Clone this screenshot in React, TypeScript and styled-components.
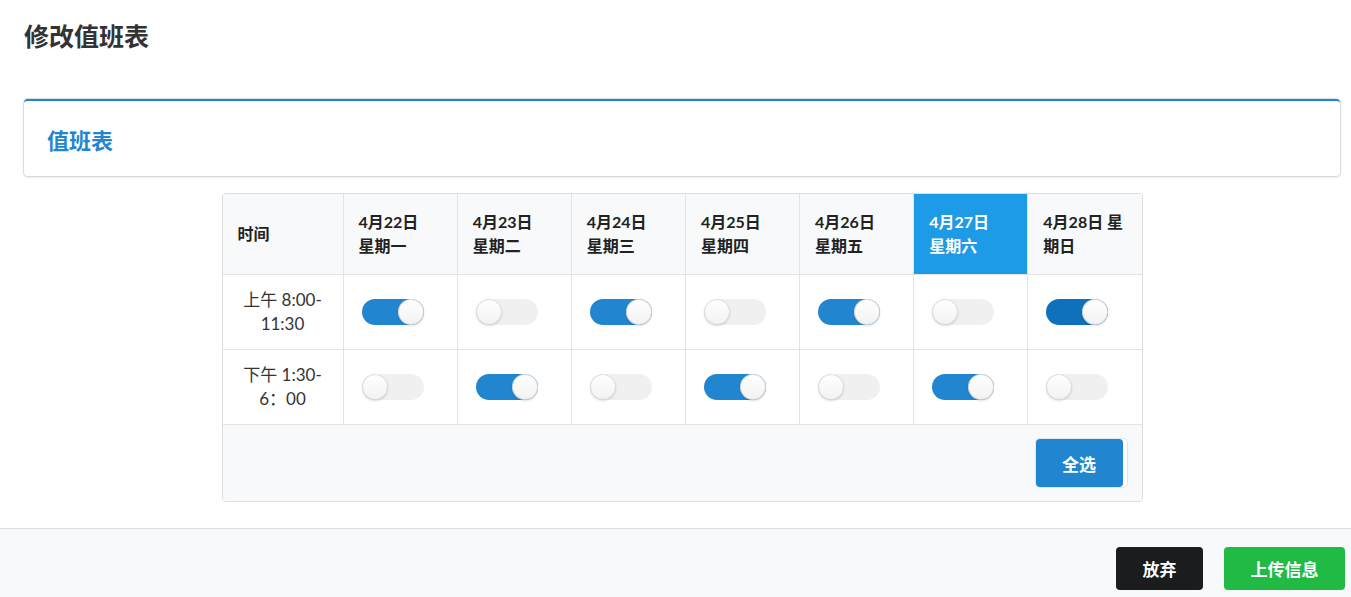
import styled, {createGlobalStyle} from "styled-components";
import {useState} from "react";

const GlobalStyle = createGlobalStyle`
  html, body {
    margin: 0;
    padding: 0;
    background: #fff;
  }

  body {
    font-family: Lato, "Noto Sans CJK SC", "Helvetica Neue", Arial, sans-serif;
    font-size: 14px;
    color: rgba(0, 0, 0, .87);
  }
`
const Page = styled.div`
  width: 1351px;
  height: 597px;
  display: flex;
  flex-direction: column;
  overflow: hidden;
`
const Main = styled.div`
  flex-grow: 1;
  padding: 0 11px 0 24px;
`
const PageTitle = styled.h1`
  margin: 0;
  padding: 21px 0 0;
  height: 99px;
  box-sizing: border-box;
  font-size: 25px;
  line-height: 30px;
  font-weight: 700;
  color: #333;
`
const Card = styled.div`
  height: 77px;
  box-sizing: border-box;
  border-top: 2px solid #2185d0;
  border-radius: 4px;
  background: #fff;
  box-shadow: 0 1px 3px 0 #d4d4d5, 0 0 0 1px #e3e3e3;
  display: flex;
  align-items: center;
  padding: 0 23px;

  h2 {
    margin: 0;
    font-size: 22px;
    font-weight: 700;
    color: #2185d0;
  }
`
const TableWrapper = styled.div`
  display: flex;
  justify-content: center;
  padding-top: 17px;
`
const Table = styled.table`
  width: 921px;
  border-collapse: separate;
  border-spacing: 0;
  border: 1px solid #dedede;
  border-radius: 4px;
  overflow: hidden;
  table-layout: fixed;
`
const HeadCell = styled.th<{ $active?: boolean }>`
  height: 81px;
  box-sizing: border-box;
  padding: 0 10px 0 15px;
  text-align: left;
  vertical-align: middle;
  font-size: 16px;
  line-height: 24px;
  font-weight: 700;
  background: ${p => p.$active ? '#1e9be6' : '#f8f9fa'};
  color: ${p => p.$active ? '#fff' : '#222'};
  border-bottom: 1px solid #e3e3e3;

  & + & {
    border-left: 1px solid #e3e3e3;
  }
`
const TimeCell = styled.td`
  height: 75px;
  box-sizing: border-box;
  padding: 0;
  text-align: center;
  vertical-align: middle;
  font-size: 17px;
  line-height: 24px;
  font-weight: 400;
  color: #333;
  border-bottom: 1px solid #e3e3e3;
`
const SwitchCell = styled.td`
  height: 75px;
  box-sizing: border-box;
  padding: 0 0 0 18px;
  vertical-align: middle;
  border-bottom: 1px solid #e3e3e3;
  border-left: 1px solid #e3e3e3;
`
const FootCell = styled.td`
  height: 76px;
  box-sizing: border-box;
  background: #f8f9fa;
  text-align: right;
  padding: 0 15px 0 0;
  vertical-align: middle;
`
const Toggle = styled.button<{ $on: boolean; $focus?: boolean }>`
  position: relative;
  display: block;
  width: 62px;
  height: 26px;
  padding: 0;
  border: none;
  border-radius: 13px;
  cursor: pointer;
  outline: none;
  background: ${p => p.$on ? (p.$focus ? '#0d71bb' : '#2185d0') : '#f0f0f0'};

  &::after {
    content: '';
    position: absolute;
    top: 0;
    left: ${p => p.$on ? '36px' : '0'};
    width: 26px;
    height: 26px;
    border-radius: 50%;
    background: linear-gradient(transparent, rgba(0, 0, 0, .05)) #fff;
    box-shadow: 0 1px 2px 0 rgba(34, 36, 38, .15), 0 0 0 1px rgba(34, 36, 38, .15) inset;
  }
`
const SelectAllFrame = styled.span`
  display: inline-block;
  padding-right: 4px;
  background: #fff;
  border-radius: 4px;
  box-shadow: 0 0 0 1px #e6e6e6;
`
const Button = styled.button<{ $color: string; $width: number; $height: number }>`
  display: block;
  width: ${p => p.$width}px;
  height: ${p => p.$height}px;
  border: none;
  border-radius: 4px;
  background: ${p => p.$color};
  color: #fff;
  font-family: Lato, "Noto Sans CJK SC", sans-serif;
  font-size: 17px;
  font-weight: 700;
  cursor: pointer;
`
const BottomBar = styled.div`
  height: 69px;
  box-sizing: border-box;
  border-top: 1px solid #dcdcdc;
  background: #f8f9fa;
  display: flex;
  justify-content: flex-end;
  align-items: flex-start;
  gap: 21px;
  padding: 18px 6px 0 0;
`

type Day = {
    date: string
    week: string
    inline?: boolean
}
const days: Day[] = [
    {date: '4月22日', week: '星期一'},
    {date: '4月23日', week: '星期二'},
    {date: '4月24日', week: '星期三'},
    {date: '4月25日', week: '星期四'},
    {date: '4月26日', week: '星期五'},
    {date: '4月27日', week: '星期六'},
    {date: '4月28日', week: '星期日', inline: true},
]
const shifts = [
    ['上午 8:00-', '11:30'],
    ['下午 1:30-', '6：00'],
]

const App = () => {
    const [duty, setDuty] = useState<boolean[][]>([
        [true, false, true, false, true, false, true],
        [false, true, false, true, false, true, false],
    ])
    const toggle = (row: number, col: number) => {
        setDuty(d => d.map((r, i) => i === row ? r.map((v, j) => j === col ? !v : v) : r))
    }
    return (
        <Page>
            <GlobalStyle/>
            <Main>
                <PageTitle>修改值班表</PageTitle>
                <Card>
                    <h2>值班表</h2>
                </Card>
                <TableWrapper>
                    <Table>
                        <colgroup>
                            <col style={{width: 120}}/>
                            {days.map(day => <col key={day.date}/>)}
                        </colgroup>
                        <thead>
                        <tr>
                            <HeadCell>时间</HeadCell>
                            {days.map((day, i) =>
                                <HeadCell key={day.date} $active={i === 5}>
                                    {day.inline ? `${day.date} ${day.week}` : <>{day.date}<br/>{day.week}</>}
                                </HeadCell>
                            )}
                        </tr>
                        </thead>
                        <tbody>
                        {shifts.map((shift, row) =>
                            <tr key={row}>
                                <TimeCell>{shift[0]}<br/>{shift[1]}</TimeCell>
                                {duty[row].map((on, col) =>
                                    <SwitchCell key={col}>
                                        <Toggle $on={on}
                                                $focus={row === 0 && col === 6}
                                                onClick={() => toggle(row, col)}/>
                                    </SwitchCell>
                                )}
                            </tr>
                        )}
                        <tr>
                            <FootCell colSpan={8}>
                                <SelectAllFrame>
                                    <Button $color='#2185d0' $width={87} $height={48}
                                            onClick={() => setDuty(d => d.map(r => r.map(() => true)))}>
                                        全选
                                    </Button>
                                </SelectAllFrame>
                            </FootCell>
                        </tr>
                        </tbody>
                    </Table>
                </TableWrapper>
            </Main>
            <BottomBar>
                <Button $color='#1b1c1d' $width={87} $height={43}>放弃</Button>
                <Button $color='#21ba45' $width={121} $height={43}>上传信息</Button>
            </BottomBar>
        </Page>
    )
}

export default App
